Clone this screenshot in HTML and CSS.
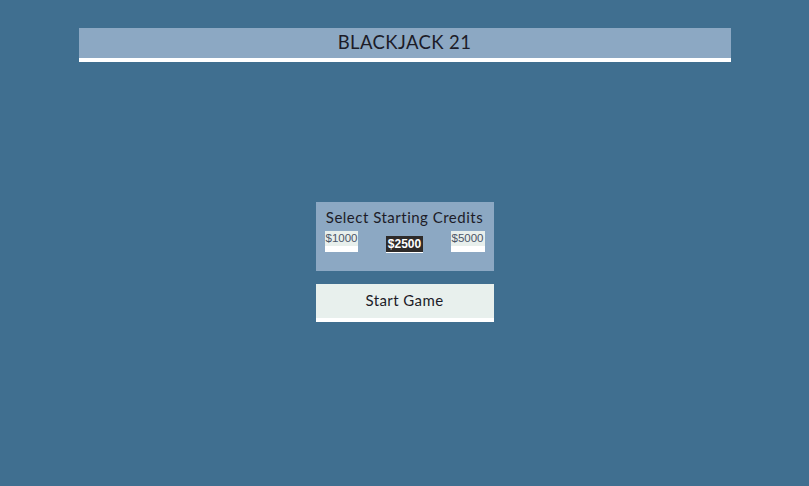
FILE: index.html
```html
<!DOCTYPE html>
<html>
<head>
<meta charset="utf-8">
<link rel="stylesheet" href="styles.css">
</head>
<body>
<header class="header">BLACKJACK 21</header>
<main class="main">
  <section class="panel">
    <div class="panel-title">Select Starting Credits</div>
    <div class="credits">
      <button class="credit">$1000</button>
      <button class="credit selected">$2500</button>
      <button class="credit">$5000</button>
    </div>
  </section>
  <button class="start">Start Game</button>
</main>
</body>
</html>
```
FILE: styles.css
```css
html, body {
  margin: 0;
  padding: 0;
}
body {
  background: #406f90;
  width: 809px;
  height: 486px;
  overflow: hidden;
  font-family: "Lato", "Noto Sans", sans-serif;
  color: #1c1c28;
}
.header {
  width: 652px;
  height: 30px;
  box-sizing: content-box;
  margin: 28px auto 0;
  background: #8ca8c3;
  border-bottom: 4px solid #ffffff;
  text-align: center;
  font-size: 18.5px;
  line-height: 28px;
  padding-bottom: 0;
  letter-spacing: 0.4px;
}
.main {
  display: flex;
  flex-direction: column;
  align-items: center;
  padding-top: 140px;
}
.panel {
  width: 178px;
  box-sizing: border-box;
  background: #8ca8c3;
  padding: 6px 9px 18px;
}
.panel-title {
  text-align: center;
  font-size: 15px;
  line-height: 18px;
  letter-spacing: 0.5px;
}
.credits {
  display: flex;
  justify-content: space-between;
  align-items: flex-end;
  margin-top: 5px;
  height: 22px;
}
.credit {
  border: 0;
  border-bottom: 6px solid #ffffff;
  margin: 0 0 1px;
  padding: 1px 1px 0;
  height: 21px;
  box-sizing: border-box;
  background: #e8efec;
  font-family: "Liberation Sans", Arial, sans-serif;
  font-size: 11.5px;
  line-height: 13px;
  color: #4a5568;
  display: flex;
  align-items: flex-start;
}
.credit.selected {
  background: #2e2b2a;
  color: #ffffff;
  border-bottom: 1px solid #ffffff;
  height: 17px;
  margin: 0;
  padding: 1px 2px 0;
  font-weight: bold;
  font-size: 12px;
  line-height: 15px;
}
.start {
  margin-top: 13px;
  width: 178px;
  height: 38px;
  box-sizing: border-box;
  border: 0;
  border-bottom: 4px solid #ffffff;
  background: #e8f0ed;
  font-family: "Lato", "Noto Sans", sans-serif;
  font-size: 15px;
  color: #1c1c28;
  letter-spacing: 0.4px;
  padding: 0 0 2px;
}
```
